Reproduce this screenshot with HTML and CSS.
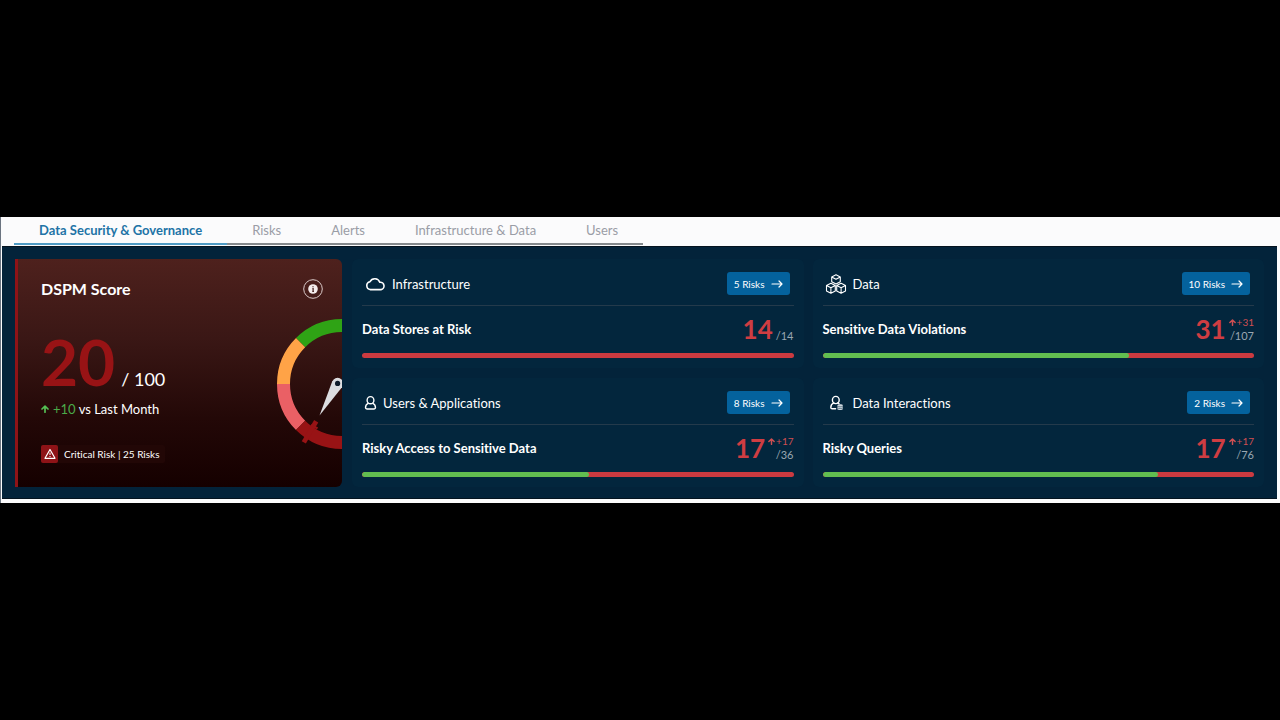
FILE: index.html
```html
<!DOCTYPE html>
<html lang="en">
<head>
    <meta charset="UTF-8">
    <meta name="viewport" content="width=device-width, initial-scale=1.0">
    <title>Data Security &amp; Governance</title>
    <link rel="stylesheet" href="styles.css">
</head>
<body>

<svg class="symbols" aria-hidden="true">
    <symbol id="arrow-right" viewBox="0 0 12 10">
        <path d="M1 5h10M8 2L11 5L8 8" fill="none" stroke="currentColor" stroke-width="1.2" stroke-linecap="round" stroke-linejoin="round"/>
    </symbol>
    <symbol id="arrow-up" viewBox="0 0 8 8">
        <path d="M4 7.2V1.2M1 4L4 1.1L7 4" fill="none" stroke="currentColor" stroke-width="1.7" stroke-linecap="round" stroke-linejoin="round"/>
    </symbol>
</svg>

<div class="page">
    <nav class="tabs">
        <a class="tab active" href="#security">Data Security &amp; Governance</a>
        <a class="tab" href="#risks">Risks</a>
        <a class="tab" href="#alerts">Alerts</a>
        <a class="tab" href="#infrastructure">Infrastructure &amp; Data</a>
        <a class="tab" href="#users">Users</a>
    </nav>

    <main class="dashboard">
        <section class="score-card">
            <div class="score-header">
                <h2 class="score-title">DSPM Score</h2>
                <button class="info-btn" type="button" aria-label="Info">
                    <svg width="20" height="20" viewBox="0 0 20 20">
                        <circle cx="10" cy="10" r="9.3" fill="none" stroke="#d9c9c8" stroke-width="1"/>
                        <circle cx="10" cy="10" r="4.8" fill="#f4ecec"/>
                        <path d="M10 7.2v.9M9.4 9.3h.7v3M9.3 12.5h1.6" fill="none" stroke="#3d1816" stroke-width="1.2"/>
                    </svg>
                </button>
            </div>
            <div class="score"><span class="score-value">20</span><span class="score-total">/ 100</span></div>
            <p class="trend">
                <svg class="trend-icon"><use href="#arrow-up"/></svg>
                <span><span class="up">+10</span> vs Last Month</span>
            </p>
            <div class="severity">
                <span class="severity-icon">
                    <svg width="12" height="12" viewBox="0 0 12 12">
                        <path d="M6 1.5L11 10.3H1Z" fill="none" stroke="#fff" stroke-width="1.2" stroke-linejoin="round"/>
                        <path d="M6 4.6v2.4M6 8v1" stroke="#fff" stroke-width="1"/>
                    </svg>
                </span>
                <span class="severity-text">Critical Risk | 25 Risks</span>
            </div>
            <svg class="gauge" width="65" height="132" viewBox="0 0 65 132">
                <g fill="none" stroke-width="13">
                    <path d="M65 7.5A58.5 58.5 0 0 0 23.6 24.6" stroke="#2fa315"/>
                    <path d="M23.6 24.6A58.5 58.5 0 0 0 6.5 66" stroke="#ffa347"/>
                    <path d="M6.5 66A58.5 58.5 0 0 0 23.6 107.4" stroke="#ea6065"/>
                    <path d="M23.6 107.4A58.5 58.5 0 0 0 65 124.5" stroke="#981315"/>
                </g>
                <path d="M39.2 103.2L26.8 124.4" stroke="#981315" stroke-width="4.8"/>
                <path d="M34 107L40.5 110.5" stroke="#981315" stroke-width="2.5"/>
                <path d="M42.5 97.5L55.4 63L65.6 68.4Z" fill="#dcdde0"/>
                <circle cx="60.6" cy="65.4" r="5.6" fill="#dcdde0"/>
                <circle cx="60.6" cy="65.4" r="2.6" fill="#101c2b"/>
            </svg>
        </section>

        <div class="cards">
            <section class="card">
                <div class="card-header">
                    <svg class="card-icon" width="22" height="20" viewBox="0 0 22 20">
                        <path d="M6.4 15.6A4 4 0 0 1 6 7.7A5.3 5.3 0 0 1 15.8 8.3A3.7 3.7 0 0 1 17 15.6Z" fill="none" stroke="#fff" stroke-width="1.6" stroke-linejoin="round"/>
                    </svg>
                    <h3 class="card-title">Infrastructure</h3>
                    <button class="risk-btn" type="button">5 Risks <svg class="btn-arrow"><use href="#arrow-right"/></svg></button>
                </div>
                <div class="metric">
                    <h4 class="metric-name">Data Stores at Risk</h4>
                    <span class="metric-value">14</span>
                    <span class="metric-side"><span class="total">/14</span></span>
                </div>
                <div class="bar"></div>
            </section>

            <section class="card">
                <div class="card-header">
                    <svg class="card-icon" width="22" height="20" viewBox="0 0 22 20">
                        <g fill="none" stroke="#fff" stroke-width="1.1" stroke-linejoin="round">
                            <path d="M11 .7L15.3 2.9V7.8L11 10L6.7 7.8V2.9ZM6.7 2.9L11 5.2L15.3 2.9"/>
                            <path d="M5.9 9.3L10.3 11.5V16.9L5.9 19.2L1.5 16.9V11.5ZM1.5 11.5L5.9 13.8L10.3 11.5M5.9 13.8V19.2"/>
                            <path d="M16.1 9.3L20.5 11.5V16.9L16.1 19.2L11.7 16.9V11.5ZM11.7 11.5L16.1 13.8L20.5 11.5M16.1 13.8V19.2"/>
                        </g>
                    </svg>
                    <h3 class="card-title">Data</h3>
                    <button class="risk-btn" type="button">10 Risks <svg class="btn-arrow"><use href="#arrow-right"/></svg></button>
                </div>
                <div class="metric">
                    <h4 class="metric-name">Sensitive Data Violations</h4>
                    <span class="metric-value">31</span>
                    <span class="metric-side">
                        <span class="delta"><svg class="delta-icon"><use href="#arrow-up"/></svg>+31</span>
                        <span class="total">/107</span>
                    </span>
                </div>
                <div class="bar"><div class="bar-ok" style="width: 71%"></div></div>
            </section>

            <section class="card">
                <div class="card-header">
                    <svg class="card-icon" width="13" height="20" viewBox="0 0 13 20">
                        <g fill="none" stroke="#fff" stroke-width="1.4" stroke-linejoin="round">
                            <ellipse cx="6.5" cy="7.2" rx="3.4" ry="3.6"/>
                            <path d="M4.5 10.1C2.2 11.2 1.5 12.8 1.5 14.6Q1.5 16 2.9 16H10.1Q11.5 16 11.5 14.6C11.5 12.8 10.8 11.2 8.5 10.1"/>
                        </g>
                    </svg>
                    <h3 class="card-title">Users &amp; Applications</h3>
                    <button class="risk-btn" type="button">8 Risks <svg class="btn-arrow"><use href="#arrow-right"/></svg></button>
                </div>
                <div class="metric">
                    <h4 class="metric-name">Risky Access to Sensitive Data</h4>
                    <span class="metric-value">17</span>
                    <span class="metric-side">
                        <span class="delta"><svg class="delta-icon"><use href="#arrow-up"/></svg>+17</span>
                        <span class="total">/36</span>
                    </span>
                </div>
                <div class="bar"><div class="bar-ok" style="width: 52.7%"></div></div>
            </section>

            <section class="card">
                <div class="card-header">
                    <svg class="card-icon" width="22" height="20" viewBox="0 0 22 20">
                        <g fill="none" stroke="#fff" stroke-width="1.4" stroke-linejoin="round" stroke-linecap="round">
                            <ellipse cx="10.8" cy="7" rx="3.4" ry="3.6"/>
                            <path d="M8.8 9.9C6.5 11 5.8 12.6 5.8 14.4Q5.8 15.8 7.2 15.8H10.6M12.8 9.9L14 10.6"/>
                        </g>
                        <path d="M12.4 12.4C12.4 11 17.8 11 17.8 12.4V16C17.8 17.4 12.4 17.4 12.4 16Z" fill="#cfd8df"/>
                        <path d="M12.4 13.2C13.5 14 16.7 14 17.8 13.2M12.4 15C13.5 15.8 16.7 15.8 17.8 15" fill="none" stroke="#03263d" stroke-width=".5"/>
                    </svg>
                    <h3 class="card-title">Data Interactions</h3>
                    <button class="risk-btn" type="button">2 Risks <svg class="btn-arrow"><use href="#arrow-right"/></svg></button>
                </div>
                <div class="metric">
                    <h4 class="metric-name">Risky Queries</h4>
                    <span class="metric-value">17</span>
                    <span class="metric-side">
                        <span class="delta"><svg class="delta-icon"><use href="#arrow-up"/></svg>+17</span>
                        <span class="total">/76</span>
                    </span>
                </div>
                <div class="bar"><div class="bar-ok" style="width: 77.7%"></div></div>
            </section>
        </div>
    </main>
</div>

</body>
</html>
```
FILE: styles.css
```css
* {
    box-sizing: border-box;
}
body {
    margin: 0;
    min-height: 100vh;
    display: flex;
    flex-direction: column;
    justify-content: center;
    background-color: #000;
    color: #fff;
    font-family: Lato, "Liberation Sans", sans-serif;
    font-size: 13px;
    font-variant-ligatures: none;
}
h2, h3, h4, p {
    margin: 0;
}
svg {
    display: block;
    flex: none;
}
button {
    font-family: inherit;
    cursor: pointer;
}
.symbols {
    position: absolute;
    width: 0;
    height: 0;
}
.page {
    background-color: #fbfbfc;
    border-left: 1px solid #6b7480;
    padding: 0 3px 4px 1px;
}

/* Tabs */
.tabs {
    display: flex;
    width: max-content;
    margin: 0 0 1px 12px;
}
.tab {
    height: 28px;
    padding: 0 25px;
    line-height: 27px;
    color: #9a9da6;
    border-bottom: 2px solid #85898c;
    text-decoration: none;
}
.tab.active {
    color: #2173a6;
    font-weight: bold;
    border-bottom-color: #4f9bc4;
}

/* Dashboard */
.dashboard {
    display: flex;
    gap: 10px;
    padding: 12px 13px 11px;
    background-color: #03233a;
    border-top: 1px solid #04131f;
    border-bottom: 1px solid #04131f;
}
.cards {
    flex: 1;
    display: grid;
    grid-template-columns: 1fr 1fr;
    gap: 10px 9px;
}

/* Score card */
.score-card {
    position: relative;
    width: 327px;
    padding: 19px 19px 0 23px;
    border-left: 3px solid #8e1317;
    border-radius: 0 6px 6px 0;
    background: linear-gradient(#4e211d, #3a1715 35%, #230807 70%, #150000);
    overflow: hidden;
}
.score-header {
    display: flex;
    justify-content: space-between;
    align-items: center;
}
.score-title {
    font-size: 16px;
    line-height: 22px;
}
.info-btn {
    padding: 0;
    border: 0;
    background: none;
}
.score {
    display: flex;
    align-items: baseline;
    gap: 6px;
    margin-top: 30px;
}
.score-value {
    color: #981315;
    font-size: 64px;
    font-weight: bold;
    line-height: 64px;
}
.score-total {
    font-size: 18px;
    line-height: 20px;
}
.trend {
    display: flex;
    align-items: center;
    gap: 4px;
    margin-top: 7px;
    line-height: 16px;
}
.trend-icon {
    width: 8px;
    height: 8px;
    color: #55c054;
}
.up {
    color: #4bab49;
}
.severity {
    display: flex;
    width: max-content;
    margin-top: 28px;
    border-radius: 2px;
    background-color: #220706;
}
.severity-icon {
    display: flex;
    align-items: center;
    justify-content: center;
    width: 17px;
    height: 18px;
    border-radius: 2px;
    background-color: #8e1317;
}
.severity-text {
    padding: 0 6px;
    font-size: 10px;
    line-height: 18px;
}
.gauge {
    position: absolute;
    right: 0;
    top: 59px;
}

/* Metric cards */
.card {
    padding: 13px 10px 10px;
    border-radius: 6px;
    background-color: #03263d;
}
.card-header {
    display: flex;
    align-items: center;
    gap: 6px;
    padding: 0 4px 10px 2px;
    border-bottom: 1px solid #243a4b;
}
.card-title {
    flex: 1;
    font-size: 13px;
    font-weight: normal;
}
.risk-btn {
    display: flex;
    align-items: center;
    gap: 6px;
    height: 23px;
    padding: 0 7px;
    border: 0;
    border-radius: 3px;
    background-color: #04629d;
    color: #fff;
    font-size: 10px;
}
.btn-arrow {
    width: 12px;
    height: 10px;
}
.metric {
    display: flex;
    gap: 3px;
    height: 47px;
    line-height: 47px;
}
.metric-name {
    flex: 1;
    font-size: 13px;
}
.metric-value {
    color: #cf3d42;
    font-size: 26px;
    font-weight: bold;
}
.metric-side {
    display: flex;
    flex-direction: column;
    justify-content: flex-end;
    align-items: flex-end;
    padding-bottom: 11px;
    line-height: 13px;
}
.delta {
    display: flex;
    align-items: center;
    gap: 1px;
    color: #cf4f52;
    font-size: 10px;
}
.delta-icon {
    width: 7px;
    height: 7px;
}
.total {
    color: #9aa7b1;
    font-size: 11px;
}
.bar {
    height: 5px;
    border-radius: 3px;
    background-color: #cb3a40;
    overflow: hidden;
}
.bar-ok {
    height: 100%;
    border-radius: 3px;
    background-color: #62bd50;
}
```
